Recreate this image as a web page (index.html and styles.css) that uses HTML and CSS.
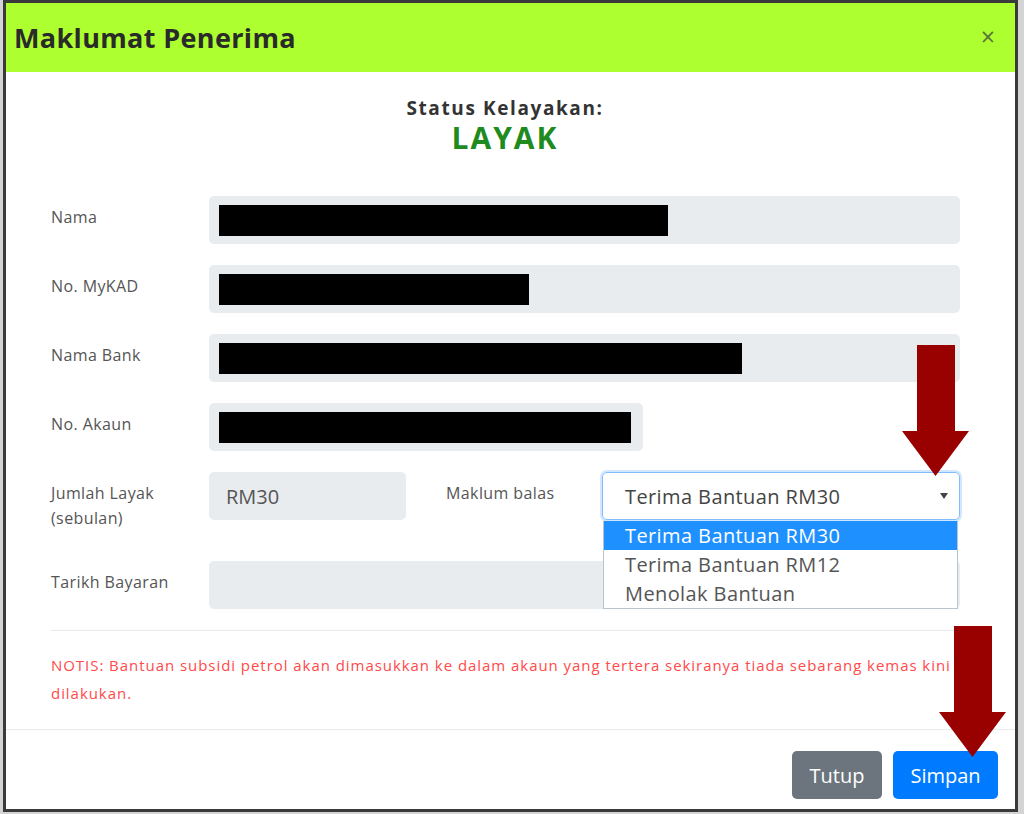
FILE: index.html
```html
<!DOCTYPE html>
<html lang="ms">
<head>
  <meta charset="UTF-8" />
  <title>Maklumat Penerima</title>
  <link rel="stylesheet" href="styles.css">
</head>
<body>

  <div class="modal">
    <div class="modal-header">
      <h2>Maklumat Penerima</h2>
      <span class="close">&times;</span>
    </div>

    <div class="modal-body">
      <div class="status">
        <div class="status-label">Status Kelayakan:</div>
        <div class="status-value">LAYAK</div>
      </div>

      <div class="form-grid">
        <label>Nama</label>
        <div class="field"><span class="redact" style="width:449px"></span></div>

        <label>No. MyKAD</label>
        <div class="field"><span class="redact" style="width:310px"></span></div>

        <label>Nama Bank</label>
        <div class="field"><span class="redact" style="width:523px"></span></div>

        <label>No. Akaun</label>
        <div class="field field-akaun"><span class="redact" style="width:412px"></span></div>

        <label class="tall">Jumlah Layak<br>(sebulan)</label>
        <div class="split">
          <div class="field field-amount">RM30</div>
          <label class="inline-label">Maklum balas</label>
          <div class="select-wrap">
            <div class="select">
              <span>Terima Bantuan RM30</span>
              <span class="caret"></span>
            </div>
            <ul class="options">
              <li class="active">Terima Bantuan RM30</li>
              <li>Terima Bantuan RM12</li>
              <li>Menolak Bantuan</li>
            </ul>
          </div>
        </div>

        <label>Tarikh Bayaran</label>
        <div class="field"></div>
      </div>

      <hr>

      <p class="notis">NOTIS: Bantuan subsidi petrol akan dimasukkan ke dalam akaun yang tertera sekiranya tiada sebarang kemas kini dilakukan.</p>
    </div>

    <div class="modal-footer">
      <button class="btn btn-grey">Tutup</button>
      <button class="btn btn-blue">Simpan</button>
    </div>
  </div>

  <!-- red pointer arrows drawn on top of the screenshot -->
  <svg class="arrow arrow-select" viewBox="0 0 67 131">
    <polygon points="15,0 53,0 53,86 67,86 33.5,131 0,86 15,86" />
  </svg>
  <svg class="arrow arrow-save" viewBox="0 0 67 131">
    <polygon points="15,0 53,0 53,86 67,86 33.5,131 0,86 15,86" />
  </svg>

</body>
</html>
```

FILE: styles.css
```css
body {
  margin: 0;
  background: #d4d4d4;
  font-family: "Open Sans", "Liberation Sans", sans-serif;
}

.modal {
  box-sizing: border-box;
  width: 1015px;
  height: 812px;
  margin-left: 3px;
  border: 3px solid #3a3a3a;
  background: #fff;
  display: flex;
  flex-direction: column;
}

.modal-header {
  height: 69px;
  background: #adff2f;
  display: flex;
  align-items: center;
  justify-content: space-between;
  padding: 0 20px 0 8px;
}

.modal-header h2 {
  margin: 0;
  font-size: 27px;
  font-weight: bold;
  color: #2a2a2a;
  letter-spacing: 0.35px;
}

.close {
  font-size: 25px;
  color: #58733d;
  margin-top: -4px;
}

.modal-body {
  padding: 24px 56px 22px 45px;
}

.status {
  text-align: center;
  margin-bottom: 40px;
}

.status-label {
  font-size: 19px;
  line-height: 24px;
  font-weight: bold;
  color: #333;
  letter-spacing: 1.6px;
}

.status-value {
  font-size: 30px;
  line-height: 36px;
  font-weight: bold;
  color: #1f8b1f;
  letter-spacing: 2px;
}

.form-grid {
  display: grid;
  grid-template-columns: 158px 1fr;
  row-gap: 21px;
}

label {
  font-size: 16px;
  line-height: 25px;
  color: #555;
  padding-top: 9px;
  letter-spacing: 0.4px;
}

label.tall {
  padding-bottom: 9px;
}

.field {
  box-sizing: border-box;
  height: 48px;
  background: #e9ecef;
  border-radius: 5px;
  display: flex;
  align-items: center;
  padding-left: 10px;
}

.field-akaun {
  width: 434px;
}

.redact {
  display: block;
  height: 31px;
  background: #000;
}

.split {
  display: flex;
  align-items: flex-start;
}

.field-amount {
  width: 197px;
  padding-left: 17px;
  font-size: 20px;
  color: #555;
}

.inline-label {
  width: 156px;
  margin-left: 40px;
}

.select-wrap {
  position: relative;
  width: 358px;
}

.select {
  box-sizing: border-box;
  height: 48px;
  border: 1px solid #80bdff;
  border-radius: 5px;
  box-shadow: 0 0 0 2px rgba(0, 123, 255, 0.18);
  display: flex;
  align-items: center;
  justify-content: space-between;
  padding: 0 11px 0 22px;
  font-size: 20px;
  color: #444;
  letter-spacing: 0.4px;
}

.caret {
  width: 0;
  height: 0;
  border-left: 4px solid transparent;
  border-right: 4px solid transparent;
  border-top: 6px solid #444;
}

.options {
  position: absolute;
  top: 49px;
  left: 1px;
  width: 355px;
  box-sizing: border-box;
  margin: 0;
  padding: 0;
  list-style: none;
  background: #fff;
  border: 1px solid #b8c4d0;
  border-top: none;
}

.options li {
  height: 29px;
  line-height: 29px;
  padding-left: 21px;
  font-size: 20px;
  color: #555;
  letter-spacing: 0.4px;
}

.options li.active {
  background: #1e90ff;
  color: #fff;
}

hr {
  border: none;
  border-top: 1px solid #e9ecef;
  margin: 21px 0 20px;
}

.notis {
  margin: 0;
  font-size: 15px;
  line-height: 28px;
  color: #ff4a4a;
  letter-spacing: 0.95px;
}

.modal-footer {
  border-top: 1px solid #e9ecef;
  display: flex;
  justify-content: flex-end;
  gap: 11px;
  padding: 21px 17px 0 0;
}

.btn {
  height: 48px;
  border: none;
  border-radius: 5px;
  font-family: inherit;
  font-size: 20px;
  color: #fff;
  padding: 0 16px;
}

.btn-grey {
  background: #6c757d;
  width: 90px;
}

.btn-blue {
  background: #007bff;
  width: 105px;
}

.arrow {
  position: absolute;
  width: 67px;
  height: 131px;
  fill: #990000;
}

.arrow-select {
  left: 902px;
  top: 345px;
}

.arrow-save {
  left: 939px;
  top: 626px;
}
```
